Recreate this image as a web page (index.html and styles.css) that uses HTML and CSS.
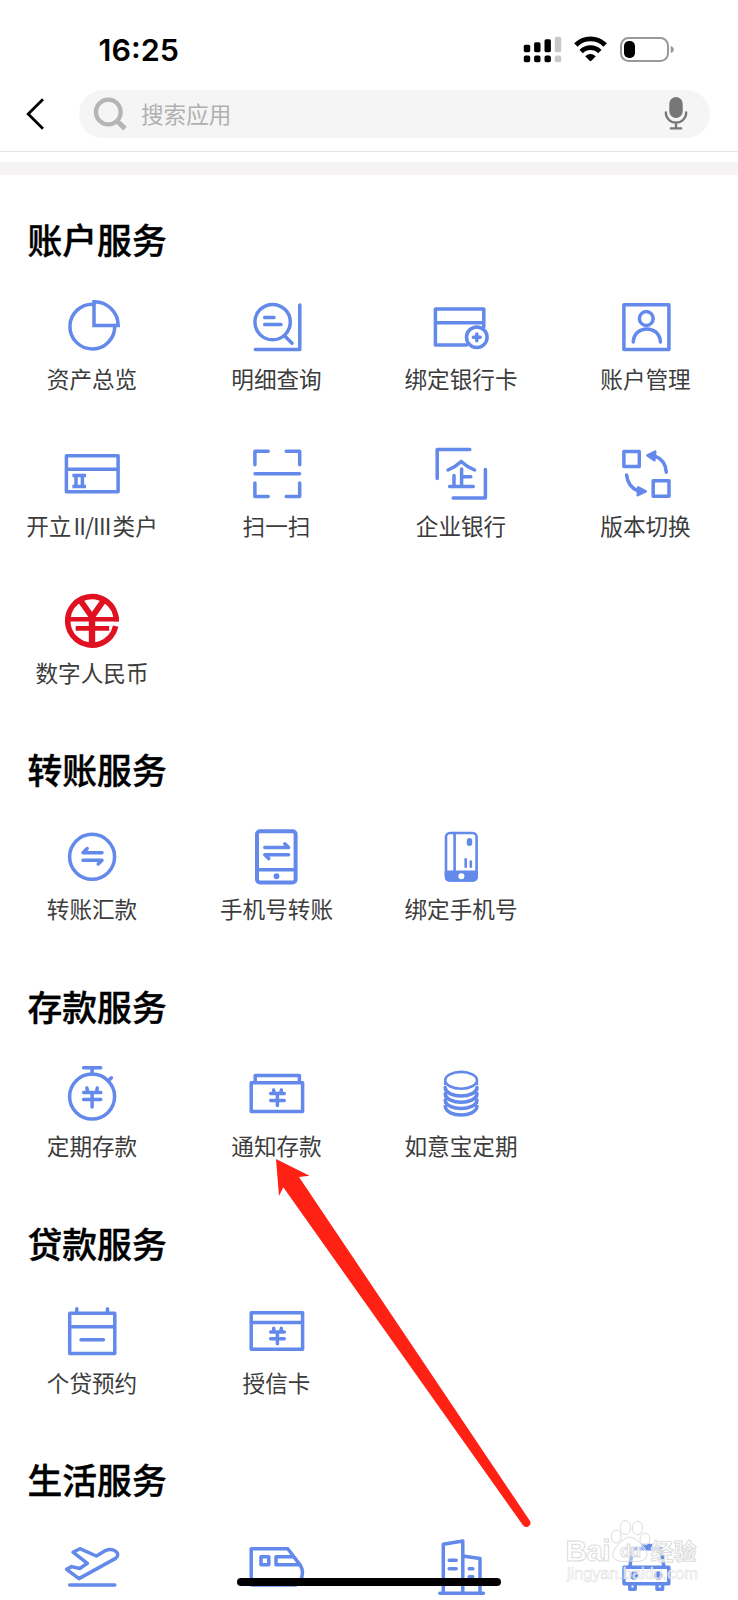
FILE: index.html
```html
<!DOCTYPE html>
<html lang="zh-CN">
<head>
<meta charset="UTF-8">
<meta name="viewport" content="width=device-width, initial-scale=1.0">
<title>全部应用</title>
<link rel="stylesheet" href="styles.css">
</head>
<body>
<div class="page">

<!-- Status bar -->
<div class="status-bar">
  <span class="time">16:25</span>
  <svg class="status-icons" width="152" height="28" viewBox="0 0 152 28">
    <g>
      <rect x="0.8" y="8.7" width="6.4" height="7.5" rx="1.6"/>
      <rect x="11.1" y="6.3" width="6.4" height="9.9" rx="1.6"/>
      <rect x="21.5" y="3.3" width="6.4" height="12.9" rx="1.6"/>
      <rect x="0.8" y="19.6" width="6.4" height="6.7" rx="1.8"/>
      <rect x="11.1" y="19.6" width="6.4" height="6.7" rx="1.8"/>
      <rect x="21.5" y="19.6" width="6.4" height="6.7" rx="1.8"/>
    </g>
    <g fill="#c8c8c8">
      <rect x="31.8" y="0.8" width="6.4" height="15.4" rx="1.6"/>
      <rect x="31.8" y="19.6" width="6.4" height="6.7" rx="1.8"/>
    </g>
    <g fill="none" stroke="#000" stroke-width="4.8">
      <path d="M52.8 9 A20.5 20.5 0 0 1 82.2 9"/>
      <path d="M58.2 15.6 A13 13 0 0 1 76.8 15.6"/>
    </g>
    <path d="M62.2 20.2 Q67.5 16 72.8 20.2 L68.4 24.8 Q67.5 25.6 66.6 24.8 Z"/>
    <rect x="98" y="2" width="47" height="23" rx="7.5" fill="none" stroke="#999" stroke-width="2"/>
    <rect x="101" y="5" width="11" height="17" rx="5"/>
    <path d="M147.7 10 Q150.8 11 150.8 13.5 T147.7 17 Z" fill="#999"/>
  </svg>
</div>

<!-- Search header -->
<div class="header">
  <svg class="back" width="20" height="34" viewBox="0 0 20 34"><path d="M18 2.3 L3.2 17 L18 31.7" fill="none" stroke="#000" stroke-width="2.8"/></svg>
  <div class="search">
    <svg width="36" height="36" viewBox="0 0 36 36" fill="none" stroke="#b5b5b5" stroke-width="4.2">
      <circle cx="16.3" cy="16" r="12.4"/>
      <path d="M25 25 L33 32.6" stroke-width="5"/>
    </svg>
    <span class="placeholder">搜索应用</span>
    <svg class="mic" width="26" height="36" viewBox="0 0 26 36">
      <rect x="6.3" y="1" width="13.4" height="21" rx="6.7" fill="#777"/>
      <path d="M2.8 16.5 A10.2 10.2 0 0 0 23.2 16.5 M13 26.5 V32.4 M7.8 32.4 H18.2" fill="none" stroke="#777" stroke-width="2.3" stroke-linecap="round"/>
    </svg>
  </div>
</div>
<div class="band"></div>

<div class="content">

<div class="section">
  <h2>账户服务</h2>
  <div class="grid">
    <div class="item">
      <svg class="icon" viewBox="0 0 60 60">
        <path d="M52.7 28.5 A22.4 22.4 0 1 1 32 7.2"/>
        <path d="M32 4.7 V28.5 H56.2 A24 24 0 0 0 32 4.7 Z" stroke-linejoin="miter"/>
      </svg>
      <span>资产总览</span>
    </div>
    <div class="item">
      <svg class="icon" viewBox="0 0 60 60">
        <circle cx="25.6" cy="25.1" r="17.7"/>
        <path d="M37.5 38.8 L45 46.2 M17.6 20.4 H27 M17.6 27.4 H34"/>
        <path d="M52.8 8 V52.4 H8.3"/>
      </svg>
      <span>明细查询</span>
    </div>
    <div class="item">
      <svg class="icon" viewBox="0 0 60 60">
        <path d="M35.5 48 H4.4 V12 H52.8 V30 M4.4 25.7 H52.8"/>
        <circle cx="45.8" cy="40.3" r="10.3"/>
        <path d="M45.8 36.9 V43.7 M42.4 40.3 H49.2"/>
      </svg>
      <span>绑定银行卡</span>
    </div>
    <div class="item">
      <svg class="icon" viewBox="0 0 60 60">
        <rect x="7.9" y="7.8" width="45" height="44.8"/>
        <circle cx="30.3" cy="21.5" r="6.9"/>
        <path d="M17.3 45 C18 27.5 43.6 27.5 44.4 45"/>
      </svg>
      <span>账户管理</span>
    </div>
    <div class="item">
      <svg class="icon" viewBox="0 0 60 60">
        <path d="M4.4 11.7 H56.1 V47.8 H4.4 Z M4.4 25.3 H56"/>
        <path d="M10.4 31.4 H24 M10.4 42.4 H24 M14 31.4 V42.4 M20.4 31.4 V42.4" stroke-linecap="butt"/>
      </svg>
      <span>开立<span class="roman">II/III</span>类户</span>
    </div>
    <div class="item">
      <svg class="icon" viewBox="0 0 60 60">
        <path d="M7.9 20.8 V7.3 H21.2 M39.2 7.3 H52.7 V20.8 M7.9 39 V52.4 H21.2 M39.2 52.4 H52.7 V39 M8 29.8 H52.6"/>
      </svg>
      <span>扫一扫</span>
    </div>
    <div class="item">
      <svg class="icon" viewBox="0 0 60 60">
        <path d="M6.2 34.5 V5.5 H38.8 M54.4 25.5 V53.9 H22.2"/>
        <path d="M17 26 Q25 22.5 30.2 17.4 Q35.5 22.5 43.6 26 M18.6 42.4 H42.3 M23 31.5 V42 M30.6 25 V42 M31 32.7 H39.8"/>
      </svg>
      <span>企业银行</span>
    </div>
    <div class="item">
      <svg class="icon" viewBox="0 0 60 60">
        <rect x="7.9" y="7.6" width="15.4" height="15"/>
        <rect x="37.2" y="36.7" width="15.8" height="15.6"/>
        <path d="M50.3 28.2 Q49.6 16 39.5 12.3 M10.6 31 Q12 43 22 46.8"/>
        <path class="solid thin" d="M31.5 11.5 L39.2 7.6 L38.4 16.2 Z M29.8 47.3 L22.2 43.3 L21.8 51.2 Z"/>
      </svg>
      <span>版本切换</span>
    </div>
    <div class="item">
      <svg class="icon red" viewBox="0 0 60 60">
        <path d="M54.3 30.2 A24.3 24.3 0 1 0 53.7 35.2" stroke-width="5.6"/>
        <path d="M4.5 28.2 H57" stroke-width="4.6"/>
        <path d="M13.7 37.4 H47.2" stroke-width="4.8"/>
        <path d="M30 23.5 V54" stroke-width="6.4"/>
        <path d="M17 7.5 L30 26 L43 7.5" stroke-width="5.8"/>
      </svg>
      <span>数字人民币</span>
    </div>
  </div>
</div>

<div class="section">
  <h2>转账服务</h2>
  <div class="grid">
    <div class="item">
      <svg class="icon" viewBox="0 0 60 60">
        <circle cx="30.1" cy="29.8" r="22.5"/>
        <path d="M40 25.8 H21 L25.2 21.6 M21 33.2 H40 L36.2 37"/>
      </svg>
      <span>转账汇款</span>
    </div>
    <div class="item">
      <svg class="icon" viewBox="0 0 60 60">
        <rect class="thick" x="10" y="4.3" width="38.6" height="51.2" rx="3"/>
        <path d="M10 42.8 H48.6"/>
        <circle class="solid" cx="29.5" cy="49.2" r="1.2"/>
        <path d="M17.8 20.6 H41.6 L37.8 16.8 M41.6 27.8 H17.8 L21.8 31.6"/>
      </svg>
      <span>手机号转账</span>
    </div>
    <div class="item">
      <svg class="icon" viewBox="0 0 60 60">
        <rect class="thin" x="15" y="6" width="30.6" height="47.4" rx="4"/>
        <path class="thin" d="M23.6 6 V44"/>
        <path class="solid thin" d="M15 44.8 H45.6 V49.5 Q45.6 53.4 41.6 53.4 H19 Q15 53.4 15 49.5 Z"/>
        <circle class="hole" cx="30.4" cy="49.2" r="3"/>
        <path class="thin" d="M34.7 32.2 V39.8 M39.8 34.6 V39.8"/>
        <rect class="pill" x="35.8" y="11" width="5.4" height="8" rx="2.7"/>
      </svg>
      <span>绑定手机号</span>
    </div>
  </div>
</div>

<div class="section">
  <h2>存款服务</h2>
  <div class="grid">
    <div class="item">
      <svg class="icon" viewBox="0 0 60 60">
        <circle cx="30.1" cy="32.6" r="22.5"/>
        <path d="M21.6 3.8 H38.8 M30.1 4 V10 M46.4 16.6 L49.4 13.8"/>
        <path d="M24.9 24 L25.8 28.2 M35.3 24 L34.4 28.2 M21.6 28.4 H38.8 M21.6 35.6 H38.8 M30.1 28.4 V43"/>
      </svg>
      <span>定期存款</span>
    </div>
    <div class="item">
      <svg class="icon" viewBox="0 0 60 60">
        <path d="M4.2 18.8 H55.6 V47.4 H4.2 Z M8.2 18.8 V11.6 H52.4 V18.8"/>
        <path d="M26.6 26 L27.3 29.3 M34.4 26 L33.7 29.3 M23.7 29.5 H37.3 M23.7 36.5 H37.3 M30.4 29.5 V41.4"/>
      </svg>
      <span>通知存款</span>
    </div>
    <div class="item">
      <svg class="icon" viewBox="0 0 60 60">
        <ellipse class="thin" cx="30.1" cy="16.3" rx="15.9" ry="8.4"/>
        <path d="M14.2 23.5 C15.5 34.7 44.7 34.7 46 23.5 M14.2 29.8 C15.5 41 44.7 41 46 29.8 M14.2 36.1 C15.5 47.3 44.7 47.3 46 36.1 M14.2 42.4 C15.5 53.8 44.7 53.8 46 42.4"/>
        <path class="thin" d="M14.2 17 V43 M46 17 V43" stroke-dasharray="1 5.3" stroke-dashoffset="-2"/>
      </svg>
      <span>如意宝定期</span>
    </div>
  </div>
</div>

<div class="section">
  <h2>贷款服务</h2>
  <div class="grid">
    <div class="item">
      <svg class="icon" viewBox="0 0 60 60">
        <path d="M7.7 12.2 H52.8 V52.4 H7.7 Z M7.7 25.7 H52.8 M14.8 7.8 V12 M45.5 7.8 V12 M19 38.8 H41.4"/>
      </svg>
      <span>个贷预约</span>
    </div>
    <div class="item">
      <svg class="icon" viewBox="0 0 60 60">
        <path d="M4.2 11.8 H55.6 V48.2 H4.2 Z M4.2 21.6 H55.6"/>
        <path d="M26.6 27.4 L27.3 30.7 M34.4 27.4 L33.7 30.7 M23.7 31 H37.3 M23.7 37.8 H37.3 M30.4 31 V42.8"/>
      </svg>
      <span>授信卡</span>
    </div>
  </div>
</div>

<div class="section">
  <h2>生活服务</h2>
  <div class="grid">
    <div class="item">
      <svg class="icon" viewBox="0 0 60 60">
        <path d="M11 15.2 L17.8 11.7 L34.4 19 L43.5 13.6 C51 10.5 60 16 53.6 21.4 L17 41.6 L4.6 32.4 L9.6 29.6 L17.8 31.5 L25.4 26.3 Z M7.7 48 H52.8"/>
      </svg>
    </div>
    <div class="item">
      <svg class="icon" viewBox="0 0 60 60">
        <path d="M4.2 11.7 H40.8 L53.4 28.4 C58 35 54 46 49 48 H4.2 Z"/>
        <rect x="14" y="19.8" width="7.8" height="8"/>
        <path d="M46.5 19.8 H29 V27.8 H52.5"/>
      </svg>
    </div>
    <div class="item">
      <svg class="icon" viewBox="0 0 60 60">
        <path d="M8.8 56.2 H52.4 M12.3 56 V7.3 L31.8 4 V56 M31.8 19 L49 21.6 V56 M18.2 23.2 H25.2 M18.2 31.8 H25.2 M38.2 31.8 H41.8 M38.2 39.8 H41.8"/>
      </svg>
    </div>
    <div class="item">
      <svg class="icon" viewBox="0 0 60 60">
        <path d="M8 30.3 H52.8 V46.8 H8 Z M13.8 30 L16.6 11.8 H45 L48 30"/>
        <path d="M13.8 47 V52.2 H19.2 V47 M41 47 V52.2 H46.6 V47"/>
        <circle class="solid" cx="18" cy="38.6" r="2.5"/>
        <circle class="solid" cx="42.3" cy="38.6" r="2.5"/>
        <path class="solid thin" d="M26.4 8 H35 V11.8 H28 Z"/>
      </svg>
    </div>
  </div>
</div>

</div>

<!-- Arrow pointing at 通知存款 -->
<svg class="arrow" width="260" height="372" viewBox="273 1157 260 372">
  <path d="M276 1159 L309.5 1175.7 L299 1177 L529.7 1520.5 A4 4 0 0 1 522.8 1525 L283.3 1187.3 L279 1196 Z" fill="#ff2114"/>
</svg>

<!-- Watermark -->
<svg class="watermark" width="145" height="80" viewBox="560 1512 145 80">
  <g class="paw">
    <ellipse cx="616.3" cy="1536.5" rx="5" ry="6.5"/>
    <ellipse cx="625.5" cy="1527.5" rx="5.2" ry="7"/>
    <ellipse cx="637.5" cy="1528" rx="5.2" ry="6.8"/>
    <ellipse cx="645" cy="1539" rx="5" ry="6"/>
    <path d="M622 1541 Q630 1533 638 1541 Q650 1551 646 1558 Q642 1563 630 1561 Q618 1563 613.5 1558 Q610 1551 622 1541 Z"/>
  </g>
  <text class="brand" x="565.5" y="1561" textLength="45">Bai</text>
  <text class="du" x="620" y="1557" textLength="21">du</text>
  <text class="brand cn" x="650.5" y="1559.5" textLength="46">经验</text>
  <text class="url" x="567" y="1579" textLength="131">jingyan.baidu.com</text>
</svg>

<div class="home-indicator"></div>
</div>
</body>
</html>
```

FILE: styles.css
```css
body {
  margin: 0;
  background-color: #fff;
  font-family: "Noto Sans CJK SC", sans-serif;
}

.page {
  position: relative;
  height: 1600px;
  overflow: hidden;
}

/* Status bar */
.status-bar {
  display: flex;
  align-items: center;
  justify-content: space-between;
  height: 50px;
  padding: 25px 63px 0 98.5px;
}

.time {
  font-family: Inter, "Liberation Sans", sans-serif;
  font-size: 30.5px;
  font-weight: 600;
  line-height: 50px;
}

/* Search header */
.header {
  display: flex;
  align-items: center;
  height: 48px;
  padding: 15px 28px 13px 25px;
  border-bottom: 1px solid #e4e4e4;
}

.back {
  margin-right: 34px;
}

.search {
  display: flex;
  flex: 1;
  align-items: center;
  height: 48px;
  padding: 0 21px 0 13px;
  border-radius: 24px;
  background-color: #f5f5f5;
}

.placeholder {
  flex: 1;
  margin: 0 0 1px 13px;
  font-size: 22.6px;
  line-height: 30px;
  color: #b0b0b0;
}

.band {
  height: 13.5px;
  margin-top: 9.5px;
  background-color: #f5f3f4;
}

/* Service sections */
.content {
  padding-top: 32px;
}

.section {
  padding-top: 7.7px;
}

.section h2 {
  margin: 0 0 33px 27.5px;
  font-size: 34.8px;
  font-weight: 500;
  line-height: 49px;
  color: #000;
  -webkit-text-stroke: 0.4px #000;
}

.grid {
  display: grid;
  grid-template-columns: repeat(4, 1fr);
  grid-auto-rows: 147px;
}

.item {
  display: flex;
  flex-direction: column;
  align-items: center;
  gap: 7px;
  font-size: 22.6px;
  line-height: 30px;
  color: #3c3c3c;
  white-space: nowrap;
}

.item > span {
  margin-right: 0.5px;
}

.roman {
  margin: 0 2px;
  letter-spacing: -0.8px;
}

.icon {
  width: 60px;
  height: 60px;
  fill: none;
  stroke: #6389ea;
  stroke-width: 3.5;
  stroke-linecap: round;
  stroke-linejoin: round;
}

.icon .solid,
.icon .pill {
  fill: #6389ea;
}

.icon .thin {
  stroke-width: 2.6;
}

.icon .thick {
  stroke-width: 4;
}

.icon .pill {
  stroke: none;
}

.icon .hole {
  fill: #fff;
  stroke: none;
}

.icon.red {
  stroke: #e01222;
  stroke-linecap: butt;
}

/* Overlays */
.arrow {
  position: absolute;
  left: 273px;
  top: 1157px;
}

.watermark {
  position: absolute;
  left: 560px;
  top: 1512px;
  fill: rgba(255, 255, 255, 0.75);
  stroke: #dcdcdc;
  stroke-width: 1;
}

.paw {
  fill: rgba(255, 255, 255, 0.4);
}

.brand {
  font-family: "Liberation Sans", sans-serif;
  font-size: 30px;
  font-weight: bold;
}

.brand.cn {
  font-family: "Noto Sans CJK SC", sans-serif;
  font-size: 23px;
}

.du {
  font-family: "Liberation Sans", sans-serif;
  font-size: 18px;
  font-weight: bold;
}

.url {
  font-family: "Liberation Sans", sans-serif;
  font-size: 16.5px;
  stroke-width: 0.5;
}

.home-indicator {
  position: absolute;
  left: 237px;
  top: 1578px;
  width: 264px;
  height: 8px;
  border-radius: 4px;
  background-color: #000;
}
```
